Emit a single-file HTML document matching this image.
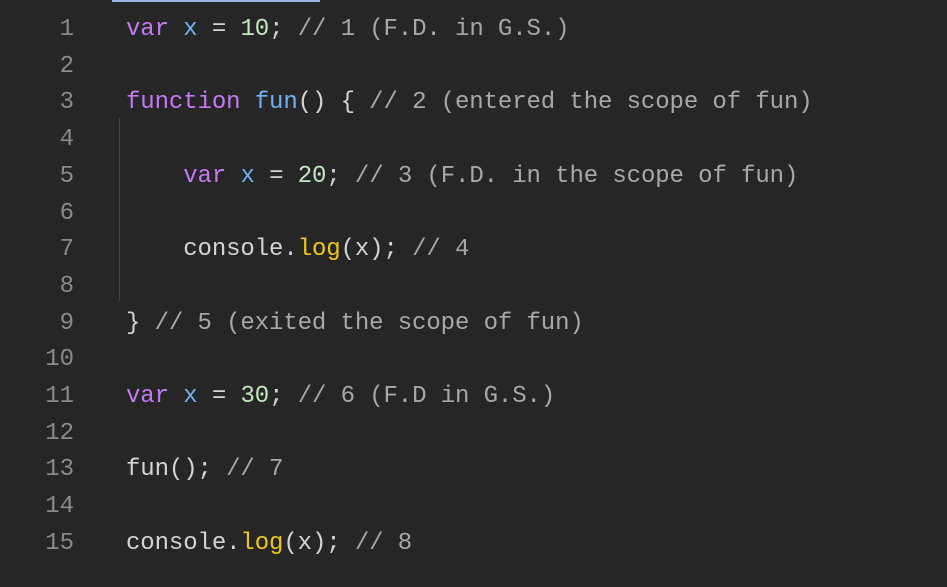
<!DOCTYPE html>
<html><head><style>
html,body{margin:0;padding:0;background:#262626;width:947px;height:587px;overflow:hidden}
.bar{position:absolute;left:112px;top:0;width:208px;height:2px;background:#9bb4e6}
.guide{position:absolute;left:119px;top:118px;width:1px;height:183px;background:#444}
.ln,.code{position:absolute;top:12px;font-family:"Liberation Mono",monospace;font-size:24px;line-height:36.71px;white-space:pre}
.ln{left:30px;width:44px;text-align:right;color:#8a8a8a}
.code{left:126px;color:#d4d4d4;letter-spacing:-0.1px}
.k{color:#c678f5}.v{color:#6fb0f5}.n{color:#c4e8c0}.c{color:#a8a8a8}.f{color:#6fb0f5}.y{color:#f2c618}
</style></head><body>
<div class="bar"></div><div class="guide"></div>
<div class="ln">1
2
3
4
5
6
7
8
9
10
11
12
13
14
15</div>
<div class="code"><span class="k">var</span> <span class="v">x</span> = <span class="n">10</span>; <span class="c">// 1 (F.D. in G.S.)</span>

<span class="k">function</span> <span class="f">fun</span>() { <span class="c">// 2 (entered the scope of fun)</span>

    <span class="k">var</span> <span class="v">x</span> = <span class="n">20</span>; <span class="c">// 3 (F.D. in the scope of fun)</span>

    console.<span class="y">log</span>(x); <span class="c">// 4</span>

} <span class="c">// 5 (exited the scope of fun)</span>

<span class="k">var</span> <span class="v">x</span> = <span class="n">30</span>; <span class="c">// 6 (F.D in G.S.)</span>

fun(); <span class="c">// 7</span>

console.<span class="y">log</span>(x); <span class="c">// 8</span></div>
</body></html>
